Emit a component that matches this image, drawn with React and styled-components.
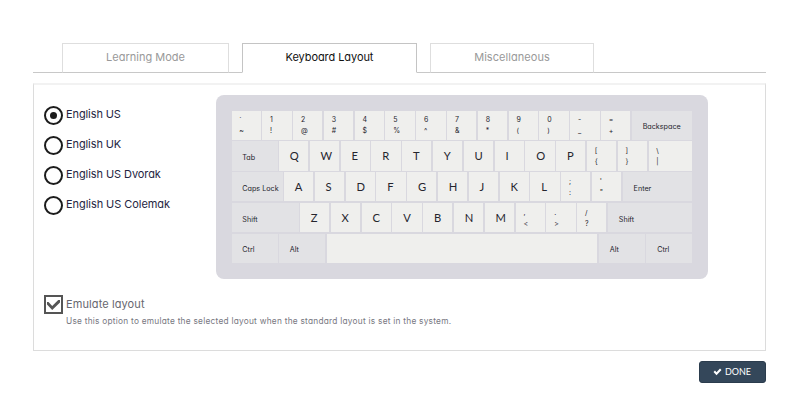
import React, { useState } from "react";
import styled, { createGlobalStyle, css } from "styled-components";

const GlobalStyle = createGlobalStyle`
  * { box-sizing: border-box; }
  body {
    margin: 0;
    background: #fff;
    font-family: Inter, "Open Sans", sans-serif;
    font-feature-settings: "cv11" 1, "calt" 0;
  }
`;

const Page = styled.main`
  width: 800px;
  height: 415px;
  padding: 43px 34px 0 33px;
  overflow: hidden;
`;

const TabBar = styled.nav`
  display: flex;
  gap: 13px;
  height: 30px;
  padding-left: 29px;
  box-shadow: inset 0 -1px #c8c8c8;
`;

const Tab = styled.button`
  width: ${(p) => p.$width}px;
  height: 30px;
  padding: 0 0 2px;
  border: 1px solid #dedede;
  border-bottom: 1px solid #c8c8c8;
  background: #fff;
  color: #999;
  font: inherit;
  font-size: 11px;
  letter-spacing: ${(p) => p.$spacing || 0}px;
  ${(p) => p.$active && css`
    color: #111;
    border-color: #c4c4c4;
    border-bottom-color: #fff;
  `}
`;

const Panel = styled.section`
  margin-top: 10px;
  height: 268px;
  width: 733px;
  padding: 11px 10px 0;
  border: 1px solid #dcdcdc;
  border-top: 2px solid #f2f2f2;
`;

const Columns = styled.div`
  display: flex;
  height: 199px;
`;

const Choices = styled.div`
  width: 172px;
  padding-top: 4.8px;
`;

const Choice = styled.label`
  display: flex;
  align-items: center;
  gap: 3px;
  height: 29.8px;
  color: #25253f;
  font-size: 11px;
  letter-spacing: ${(p) => p.$spacing || 0}px;
  white-space: nowrap;
`;

const ChoiceText = styled.span`
  padding-bottom: 2.6px;
`;

const CheckText = styled.span`
  padding-bottom: 1px;
`;

const Radio = styled.span`
  display: grid;
  place-items: center;
  width: 19px;
  height: 19px;
  border: 2px solid #1c1c1c;
  border-radius: 50%;
  &::after {
    content: "";
    width: 7px;
    height: 7px;
    border-radius: 50%;
    background: ${(p) => (p.$on ? "#1c1c1c" : "transparent")};
  }
`;

const Keyboard = styled.div`
  display: flex;
  flex-direction: column;
  gap: 1.5px;
  width: 492px;
  height: 184px;
  margin-top: -1px;
  padding: 15.5px 15.6px 0 15.5px;
  border-radius: 8px;
  background: #d9d8df;
`;

const KeyRow = styled.div`
  display: flex;
  gap: 1.5px;
  height: 29.3px;
`;

const Key = styled.div`
  flex: ${(p) => (p.$grow ? "1 1 0" : `0 0 ${p.$width || 29.3}px`)};
  display: flex;
  flex-direction: column;
  justify-content: center;
  padding-left: ${(p) => (p.$pair ? 7.8 : 10.8)}px;
  background: ${(p) => (p.$control ? "#e2e2e5" : "#efefed")};
  color: #25252d;
  font-family: Lato, sans-serif;
  font-size: 11.2px;
  line-height: 12px;
  white-space: nowrap;
  ${(p) => p.$control && css`
    padding-top: 4px;
    font-family: Inter, sans-serif;
    font-size: 7.2px;
  `}
  ${(p) => p.$pair && css`
    font-family: Inter, sans-serif;
    font-size: 7px;
    line-height: 11px;
  `}
`;

const CheckRow = styled.label`
  display: flex;
  gap: 3px;
  height: 19px;
  align-items: center;
  color: #67676f;
  font-size: 11px;
  letter-spacing: 0.1px;
`;

const CheckBox = styled.span`
  display: block;
  width: 19px;
  height: 19px;
  border: 2px solid #555;
  svg { display: block; }
`;

const Hint = styled.p`
  margin: 1px 0 0 22px;
  color: #77777f;
  font-size: 8.3px;
  line-height: 12px;
  letter-spacing: 0.25px;
  white-space: nowrap;
`;

const Footer = styled.footer`
  display: flex;
  justify-content: flex-end;
  padding-top: 10px;
`;

const DoneButton = styled.button`
  display: flex;
  align-items: center;
  justify-content: center;
  gap: 3px;
  width: 67px;
  height: 22px;
  padding: 0 1px 1px 0;
  border: 1px solid #2b3c4d;
  border-radius: 3px;
  background: #34475a;
  color: #fff;
  font-family: Lato, sans-serif;
  font-size: 9px;
`;

const tabs = [
  { name: "Learning Mode", width: 167, spacing: 0 },
  { name: "Keyboard Layout", width: 175, spacing: -0.07 },
  { name: "Miscellaneous", width: 164, spacing: 0.05 },
];

const layouts = [
  { name: "English US", spacing: -0.1 },
  { name: "English UK", spacing: -0.1 },
  { name: "English US Dvorak", spacing: -0.08 },
  { name: "English US Colemak", spacing: -0.06 },
];

const control = (label, width) => ({ label, width, control: true, grow: !width });
const letters = (text) => [...text].map((label) => ({ label }));
const pair = (a, b, grow) => ({ pair: [a, b], grow });

const rows = [
  [
    pair("`", "~"), pair("1", "!"), pair("2", "@"), pair("3", "#"), pair("4", "$"),
    pair("5", "%"), pair("6", "^"), pair("7", "&"), pair("8", "*"), pair("9", "("),
    pair("0", ")"), pair("-", "_"), pair("=", "+"), control("Backspace"),
  ],
  [control("Tab", 46), ...letters("QWERTYUIOP"), pair("[", "{"), pair("]", "}"), pair("\\", "|", true)],
  [control("Caps Lock", 51), ...letters("ASDFGHJKL"), pair(";", ":"), pair("'", "\""), control("Enter")],
  [control("Shift", 67), ...letters("ZXCVBNM"), pair(",", "<"), pair(".", ">"), pair("/", "?"), control("Shift")],
  [control("Ctrl", 46), control("Alt", 46), { label: "", grow: true }, control("Alt", 46), control("Ctrl", 46)],
];

export default function App() {
  const [tab, setTab] = useState(1);
  const [layout, setLayout] = useState(0);
  return (
    <>
      <GlobalStyle />
      <Page>
        <TabBar>
          {tabs.map((t, i) => (
            <Tab key={t.name} $width={t.width} $spacing={t.spacing} $active={i === tab} onClick={() => setTab(i)}>
              {t.name}
            </Tab>
          ))}
        </TabBar>
        <Panel>
          <Columns>
            <Choices>
              {layouts.map((l, i) => (
                <Choice key={l.name} $spacing={l.spacing} onClick={() => setLayout(i)}>
                  <Radio $on={i === layout} />
                  <ChoiceText>{l.name}</ChoiceText>
                </Choice>
              ))}
            </Choices>
            <Keyboard>
              {rows.map((row, r) => (
                <KeyRow key={r}>
                  {row.map((k, i) => (
                    <Key key={i} $width={k.width} $grow={k.grow} $control={k.control} $pair={!!k.pair}>
                      {k.pair ? k.pair.map((s) => <span key={s}>{s}</span>) : k.label}
                    </Key>
                  ))}
                </KeyRow>
              ))}
            </Keyboard>
          </Columns>
          <CheckRow>
            <CheckBox>
              <svg width="15" height="15" viewBox="0 0 15 15">
                <path d="M1 7.5 1 5 2.5 5 6.2 9 12.2 3 14 3 14 5.5 6.2 13Z" fill="#555" />
              </svg>
            </CheckBox>
            <CheckText>Emulate layout</CheckText>
          </CheckRow>
          <Hint>Use this option to emulate the selected layout when the standard layout is set in the system.</Hint>
        </Panel>
        <Footer>
          <DoneButton>
            <svg width="9" height="8" viewBox="0 0 9 8">
              <path d="M0.5 4 2 2.6 3.5 4.2 7 0.6 8.5 2 3.5 7.2Z" fill="#fff" />
            </svg>
            DONE
          </DoneButton>
        </Footer>
      </Page>
    </>
  );
}
